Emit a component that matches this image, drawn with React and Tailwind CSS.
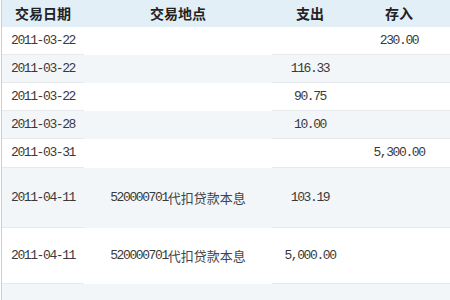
import React from 'react';

const rows = [
  { date: '2011-03-22', place: '', out: '', inc: '230.00', h: 'h-[28px]' },
  { date: '2011-03-22', place: '', out: '116.33', inc: '', h: 'h-[28px]' },
  { date: '2011-03-22', place: '', out: '90.75', inc: '', h: 'h-[28px]' },
  { date: '2011-03-28', place: '', out: '10.00', inc: '', h: 'h-[28px]' },
  { date: '2011-03-31', place: '', out: '', inc: '5,300.00', h: 'h-[29px]' },
  { date: '2011-04-11', place: '520000701', placeCn: '代扣贷款本息', out: '103.19', inc: '', h: 'h-[60px]' },
  { date: '2011-04-11', place: '520000701', placeCn: '代扣贷款本息', out: '5,000.00', inc: '', h: 'h-[56px]' },
  { date: '', place: '', out: '', inc: '', h: 'h-[40px]' },
];

const num = "font-['Liberation_Mono',monospace] text-[13px] leading-[16px] tracking-[-1.4px]";

const Row = ({ row, i }) => {
  const bg = i % 2 === 0 ? 'bg-white' : 'bg-[#f2f6f9]';
  const line = 'border-b border-[#e6eaed]';
  return (
    <div className={`grid grid-cols-[82px_188px_76px_1fr] ${row.h} ${bg} text-[#3a3a3a]`}>
      <div className={`flex items-center justify-center ${line} ${num}`}>{row.date}</div>
      <div className="flex items-center justify-center">
        {row.place && (
          <span className="flex items-center">
            <span className={num}>{row.place}</span>
            <span className="font-['Noto_Sans_CJK_SC',sans-serif] text-[13px] leading-[16px] text-[#444]">{row.placeCn}</span>
          </span>
        )}
      </div>
      <div className={`flex items-center justify-center ${line} ${num}`}>{row.out}</div>
      <div className={`flex items-center justify-center ${line} ${num}`}>{row.inc}</div>
    </div>
  );
};

export default function App() {
  return (
    <div className="w-[450px] h-[300px] overflow-hidden bg-white">
      <div className="ml-px border-l border-[#cfcfcf] h-full">
        <div className="grid grid-cols-[82px_188px_76px_1fr] h-[27px] bg-[#e3eff7] font-['Noto_Sans_CJK_SC',sans-serif] text-[14px] font-bold text-[#222]">
          <div className="flex items-center justify-center">交易日期</div>
          <div className="flex items-center justify-center">交易地点</div>
          <div className="flex items-center justify-center">支出</div>
          <div className="flex items-center justify-center">存入</div>
        </div>
        {rows.map((row, i) => (
          <Row key={i} row={row} i={i} />
        ))}
      </div>
    </div>
  );
}
